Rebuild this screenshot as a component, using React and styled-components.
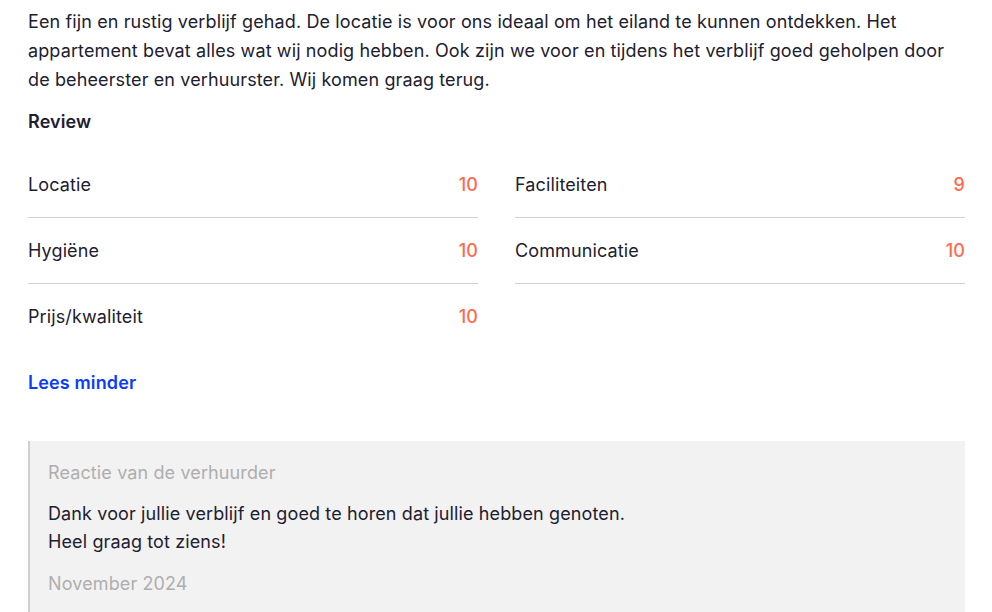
import styled, { createGlobalStyle } from "styled-components";

const GlobalStyle = createGlobalStyle`
  body {
    margin: 0;
    background: #ffffff;
    font-family: Inter, "Noto Sans", sans-serif;
    color: #1d2030;
  }
`;

const Page = styled.main`
  padding: 7px 27px 0 28px;
  font-size: 18px;
  line-height: 29px;
  letter-spacing: 0.12px;
`;

const Text = styled.p`
  margin: 0;
  max-width: 925px;
`;

const Heading = styled.h3`
  margin: 13px 0 16px;
  font-size: 18px;
  font-weight: 600;
  line-height: 29px;
`;

const Scores = styled.div`
  display: grid;
  grid-template-columns: 1fr 1fr;
  column-gap: 37px;
`;

const ScoreRow = styled.div`
  display: flex;
  align-items: center;
  justify-content: space-between;
  height: 65px;
  border-bottom: 1px solid ${(p) => (p.$last ? "transparent" : "#d2d2d2")};
`;

const Score = styled.span`
  color: #ff6a4d;
  font-weight: 500;
`;

const MoreLink = styled.a`
  display: block;
  margin: 18px 0 44px;
  color: #0a3cff;
  font-weight: 600;
  text-decoration: none;
  cursor: pointer;
`;

const Reply = styled.section`
  background: #f2f2f2;
  border-left: 2px solid #cfcfcf;
  padding: 17px 18px 40px;
`;

const Muted = styled.p`
  margin: ${(p) => p.$margin || "0"};
  color: #aeaeae;
`;

const ReplyText = styled.p`
  margin: 13px 0 0;
  line-height: 28px;
`;

const scores = [
  { label: "Locatie", value: 10 },
  { label: "Faciliteiten", value: 9 },
  { label: "Hygiëne", value: 10 },
  { label: "Communicatie", value: 10 },
  { label: "Prijs/kwaliteit", value: 10 },
];

export default function App() {
  return (
    <>
      <GlobalStyle />
      <Page>
        <Text>
          Een fijn en rustig verblijf gehad. De locatie is voor ons ideaal om
          het eiland te kunnen ontdekken. Het appartement bevat alles wat wij
          nodig hebben. Ook zijn we voor en tijdens het verblijf goed geholpen
          door de beheerster en verhuurster. Wij komen graag terug.
        </Text>
        <Heading>Review</Heading>
        <Scores>
          {scores.map((s, i) => (
            <ScoreRow key={s.label} $last={i === scores.length - 1}>
              <span>{s.label}</span>
              <Score>{s.value}</Score>
            </ScoreRow>
          ))}
        </Scores>
        <MoreLink>Lees minder</MoreLink>
        <Reply>
          <Muted>Reactie van de verhuurder</Muted>
          <ReplyText>
            Dank voor jullie verblijf en goed te horen dat jullie hebben
            genoten.
            <br />
            Heel graag tot ziens!
          </ReplyText>
          <Muted $margin="13px 0 0">November 2024</Muted>
        </Reply>
      </Page>
    </>
  );
}
